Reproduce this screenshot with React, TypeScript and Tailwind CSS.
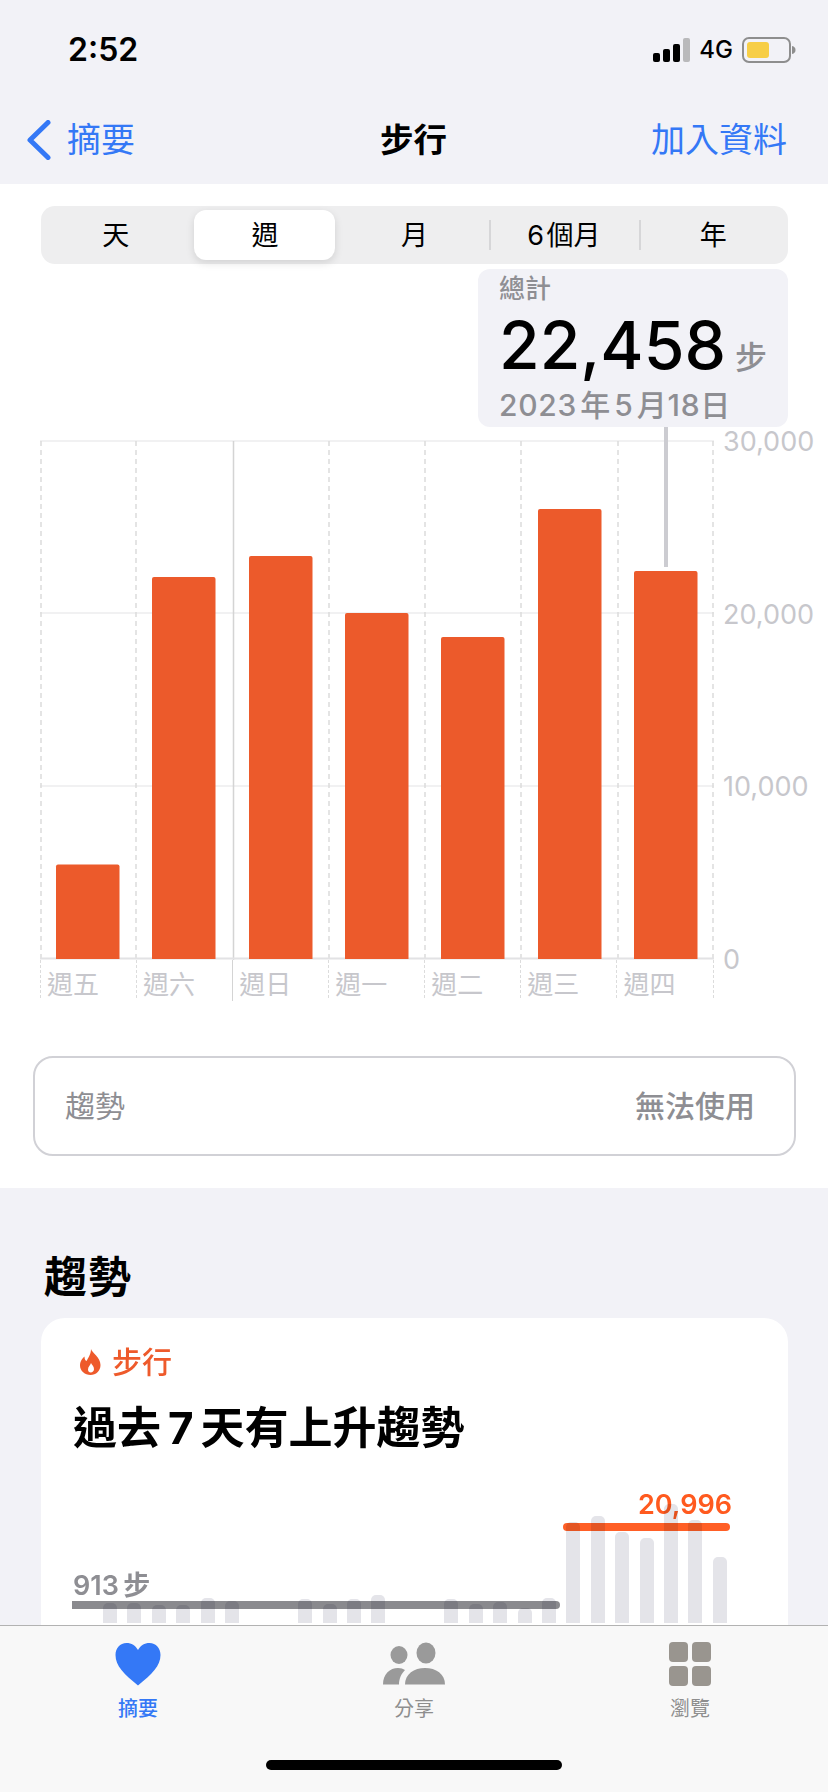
const bars: [number, number][] = [
  [56, 864.5],
  [152, 577],
  [249, 556],
  [345, 613],
  [441, 637],
  [538, 509],
  [634, 571],
];
const days = ["週五", "週六", "週日", "週一", "週二", "週三", "週四"];
const trend = [
  20, 20, 18, 18, 25, 22, 0, 0, 24, 19, 24, 28, 0, 0, 24, 19, 21, 15, 25, 101, 107, 91, 85, 119, 103, 66,
];
const segs = ["天", "週", "月", "6\u200a個月", "年"];
const font = { fontFamily: 'Inter, "Noto Sans CJK TC", sans-serif' };

function Plot() {
  return (
    <svg width="676" height="520" viewBox="40 440 676 520" className="block">
      {[441, 613, 786].map((y) => (
        <line key={y} x1="40" x2="714" y1={y} y2={y} stroke="#ececee" strokeWidth="1.5" />
      ))}
      {[41, 136, 329, 425, 521, 618, 713].map((x) => (
        <line key={x} x1={x} x2={x} y1="441" y2="960" stroke="#dcdcdc" strokeWidth="1.5" strokeDasharray="5 4" />
      ))}
      <line x1="233.5" x2="233.5" y1="441" y2="960" stroke="#d4d4d4" strokeWidth="1.5" />
      <line x1="40" x2="714" y1="958.5" y2="958.5" stroke="#e2e2e4" strokeWidth="2" />
      {bars.map(([x, top]) => (
        <path
          key={x}
          d={`M${x} 959V${top + 2}a2 2 0 0 1 2-2h59.500a2 2 0 0 1 2 2V959Z`}
          fill="#ec5a2b"
        />
      ))}
    </svg>
  );
}

export default function App() {
  return (
    <div className="w-[828px] h-[1792px] flex flex-col overflow-hidden bg-[#f2f2f7]" style={font}>
      {/* status bar */}
      <div className="h-[100px] shrink-0 flex items-center pl-[68px] pr-[38px] justify-between">
        <span className="text-[32px] font-semibold text-black leading-none">2:52</span>
        <div className="flex items-center">
          <svg width="38" height="24" viewBox="0 0 38 24" className="block">
            <rect x="0" y="15" width="7" height="9" rx="2" fill="#000" />
            <rect x="10" y="11" width="7" height="13" rx="2" fill="#000" />
            <rect x="20" y="6" width="7" height="18" rx="2" fill="#000" />
            <rect x="30" y="0" width="7" height="24" rx="2" fill="#b9b9bb" />
          </svg>
          <span className="ml-[8px] text-[24px] font-medium text-black leading-none">4G</span>
          <svg width="54" height="26" viewBox="0 0 54 26" className="block ml-[9px] mr-[-6px]">
            <rect x="1" y="1" width="47" height="24" rx="6" fill="none" stroke="#8e8e8e" strokeWidth="2" />
            <rect x="5" y="5" width="22" height="16" rx="3" fill="#f7ce46" />
            <path d="M50 9c2.500 .6 3.500 2 3.500 4s-1 3.400-3.500 4Z" fill="#8e8e8e" />
          </svg>
        </div>
      </div>
      {/* nav */}
      <div className="h-[84px] shrink-0 flex items-start justify-between pl-[26px] pr-[41px] pt-[20px] relative">
        <div className="flex items-center h-[40px]">
          <svg width="26" height="40" viewBox="0 0 26 40" className="block">
            <path d="M22 2.500L4 20l18 17.500" fill="none" stroke="#3478f6" strokeWidth="5" strokeLinecap="round" strokeLinejoin="round" />
          </svg>
          <span className="ml-[15px] text-[34px] leading-[40px] text-[#3478f6]">摘要</span>
        </div>
        <span className="absolute left-[380px] top-[20px] text-[33.5px] leading-[40px] font-semibold text-black">步行</span>
        <span className="text-[34px] leading-[40px] text-[#3478f6]">加入資料</span>
      </div>

      <div className="flex-1 min-h-0 overflow-hidden">
        {/* white section */}
        <div className="bg-white h-[1004px] pt-[22px] relative">
          <div className="ml-[41px] mr-[40px] h-[58px] rounded-[14px] bg-[#eeeeef] flex items-center relative">
            {segs.map((s, i) => (
              <div key={s} className="flex-1 h-full flex items-center justify-center relative">
                {i === 1 && (
                  <div className="absolute left-[4px] right-[5px] top-[4px] bottom-[4px] rounded-[12px] bg-white shadow-[0_3px_8px_rgba(0,0,0,0.12)]" />
                )}
                {i >= 3 && <div className="absolute left-0 top-[14px] h-[30px] w-[2px] bg-[#d6d6d8]" />}
                <span className="relative text-[27px] leading-none text-black">{s}</span>
              </div>
            ))}
          </div>

          {/* tooltip */}
          <div className="absolute left-[478px] top-[85px] w-[310px] h-[158px] rounded-[12px] bg-[#f2f2f7] z-10 pl-[21px] pt-[4px]">
            <div className="text-[26px] leading-[32px] font-medium text-[#8e8e93]">總計</div>
            <div className="flex items-end h-[70px] mt-[6px]">
              <span className="text-[66px] leading-[72px] font-medium text-black">22,458</span>
              <span className="ml-[9px] mb-[3px] text-[32px] leading-[40px] font-medium text-[#8e8e93]">步</span>
            </div>
            <div className="text-[30px] leading-[36px] mt-[6px] font-medium tracking-[0.7px] text-[#8e8e93] whitespace-nowrap">
              {"2023\u200a年\u200a5\u200a月18日"}
            </div>
          </div>
          <div className="absolute left-[664px] top-[243px] w-[4px] h-[140px] bg-[#ccccd1] z-10" />

          {/* chart */}
          <div className="ml-[40px] mt-[176px] flex relative">
            <div className="w-[676px]">
              <Plot />
              <div className="w-[673.5px] h-[38px] grid grid-cols-7 border-r-[1.5px] border-dashed border-[#dcdcdc]">
                {days.map((d, i) => (
                  <div
                    key={d}
                    className={
                      i === 2
                        ? "h-[41px] border-l-[1.5px] border-solid border-[#d4d4d4] pl-[6px] text-[26px] leading-[50px] text-[#c7c7cc]"
                        : "h-[38px] border-l-[1.5px] border-dashed border-[#dcdcdc] pl-[6px] text-[26px] leading-[50px] text-[#c7c7cc]"
                    }
                  >
                    <span className="block">{d}</span>
                  </div>
                ))}
              </div>
            </div>
            <div className="-mt-[16px] ml-[7px] h-[554px] flex flex-col justify-between text-[27px] leading-[36px] text-[#c7c7cc]">
              <span>30,000</span>
              <span>20,000</span>
              <span>10,000</span>
              <span>0</span>
            </div>
          </div>

          {/* trend row */}
          <div className="ml-[33px] mr-[32px] mt-[58px] h-[100px] rounded-[20px] border-2 border-[#d1d1d6] flex items-center justify-between pl-[30px] pr-[39px]">
            <span className="text-[30px] leading-none text-[#8e8e93]">趨勢</span>
            <span className="text-[30px] leading-none font-medium text-[#8e8e93]">無法使用</span>
          </div>
        </div>

        {/* trends */}
        <div className="pt-[64px]">
          <h2 className="pl-[44px] text-[43px] leading-[50px] font-bold tracking-[1px] text-black">趨勢</h2>
          <div className="relative ml-[41px] mr-[40px] mt-[16px] h-[500px] rounded-[24px] bg-white isolate">
            <div className="flex items-center pl-[39px] pt-[26px] h-[62px]">
              <svg width="21" height="26" viewBox="0 0 21 26" className="block">
                <path
                  fillRule="evenodd"
                  d="M11 0c1 4 9.500 8 9.500 16C20.500 22 16 26 10.500 26S0 22 0 16.500C0 12 2.500 9.500 4.500 7.500c0 2.500 .8 4 2 4.500C8.500 8.500 11 5 11 0ZM11 14c-.5 2-3 3.500-3 6.500 0 1.700 1.200 3 2.800 3S14 22 14 20.200C14 17.500 12 16 11 14Z"
                  fill="#ee5a2b"
                />
              </svg>
              <span className="ml-[11px] text-[30px] leading-none font-medium text-[#ee5a2b]">步行</span>
            </div>
            <div className="mt-[20px] pl-[32px] text-[44px] leading-[56px] font-bold text-black whitespace-nowrap">
              {"過去\u20097\u2009天有上升趨勢"}
            </div>

            <div className="relative mt-[33px] h-[150px]">
              <div className="absolute right-[56px] -top-[2px] text-[27px] leading-[36px] font-semibold text-[#ff5a1f]">20,996</div>
              <div className="absolute left-[522px] top-[34px] w-[167px] h-[8px] rounded-full bg-[#ff5f26]" />
              <div className="absolute left-[32px] top-[79px] text-[27px] leading-[36px] font-semibold text-[#8e8e93]">{"913\u2009步"}</div>
              <div className="absolute left-[31px] top-[112px] w-[488px] h-[8px] rounded-r-full bg-[#8a8a8e]" />
              <div className="absolute left-[62px] top-0 w-[624px] h-[134px] flex items-end justify-between mix-blend-multiply">
                {trend.map((h, i) => (
                  <div key={i} className="w-[14px] rounded-t-[5px] bg-[#e4e4e9]" style={{ height: h }} />
                ))}
              </div>
            </div>
          </div>
        </div>
      </div>

      {/* tab bar */}
      <div className="h-[167px] shrink-0 bg-[#f8f8f8] border-t-[1.5px] border-[#b2b2b2] relative z-20">
        <div className="flex pt-[16px]">
          <div className="flex-1 flex flex-col items-center">
            <svg width="46" height="44" viewBox="0 0 46 44" className="block">
              <path d="M23 43.500C9 32 .5 24 .5 13 .5 6 5 1 11.500 1 16.500 1 20.500 3.500 23 8 25.500 3.500 29.500 1 34.500 1 41 1 45.500 6 45.500 13 45.500 24 37 32 23 43.500Z" fill="#3478f6" />
            </svg>
            <span className="mt-[9px] text-[20px] leading-[28px] font-medium text-[#3478f6]">摘要</span>
          </div>
          <div className="flex-1 flex flex-col items-center">
            <svg width="62" height="44" viewBox="0 0 62 44" className="block">
              <ellipse cx="16" cy="13" rx="8.500" ry="9" fill="#9a9a9a" />
              <ellipse cx="43" cy="11" rx="9.500" ry="10.500" fill="#9a9a9a" />
              <path d="M0 42.500C0 32 7 26 15 26c3 0 5 .8 7 2-3.500 3.500-6 8.500-6 14.500Z" fill="#9a9a9a" />
              <path d="M22 42.500C22 32 31 26 42 26s20 6 20 16.500Z" fill="#9a9a9a" />
            </svg>
            <span className="mt-[9px] text-[20px] leading-[28px] text-[#8e8e8e]">分享</span>
          </div>
          <div className="flex-1 flex flex-col items-center">
            <div className="w-[42px] h-[44px] grid grid-cols-2 gap-[4px]">
              <div className="rounded-[4px] bg-[#99958f]" />
              <div className="rounded-[4px] bg-[#99958f]" />
              <div className="rounded-[4px] bg-[#99958f]" />
              <div className="rounded-[4px] bg-[#99958f]" />
            </div>
            <span className="mt-[9px] text-[20px] leading-[28px] text-[#8e8e8e]">瀏覽</span>
          </div>
        </div>
        <div className="mx-auto mt-[37px] w-[296px] h-[10px] rounded-full bg-black" />
      </div>
    </div>
  );
}
